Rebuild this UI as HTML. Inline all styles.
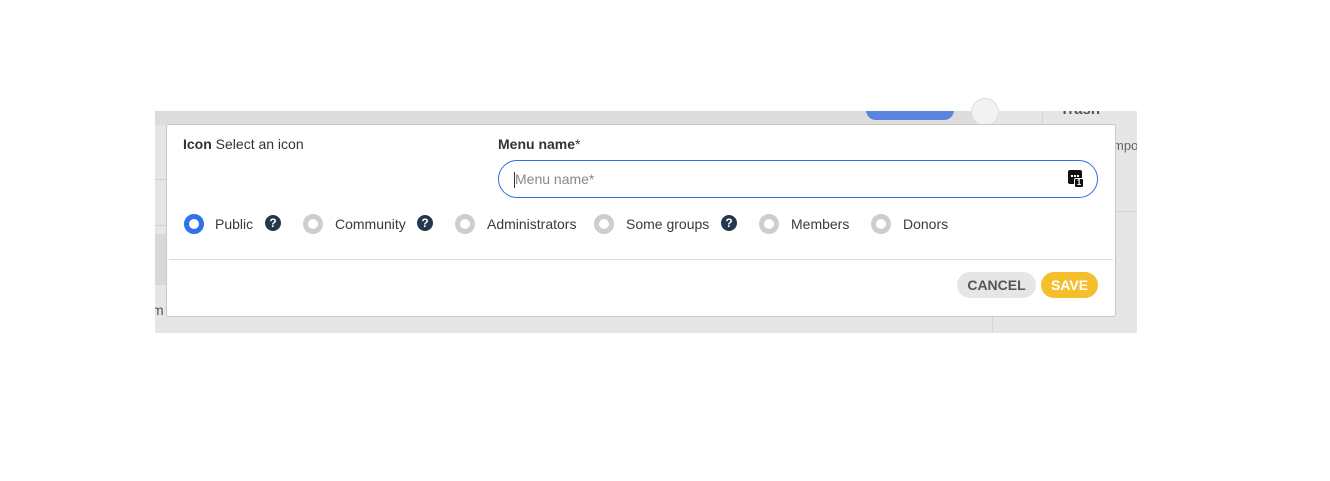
<!DOCTYPE html>
<html><head><style>
*{box-sizing:border-box;margin:0;padding:0}
body{width:1330px;height:481px;background:#fff;position:relative;font-family:"Liberation Sans",Arial,sans-serif;overflow:hidden}
.abs{position:absolute}
.dlg{left:166px;top:124px;width:950px;height:193px;background:#fff;border:1px solid #c8c8c8;border-radius:3px}
.t{font-size:14px;color:#333}
.radio{position:absolute;width:20px;height:20px;border-radius:50%;border:5px solid #cfcdc9;background:#fff}
.radio.on{border-color:#2f73e8}
.q{position:absolute;width:16px;height:16px;border-radius:50%;background:#253650;color:#fff;font-size:12px;font-weight:bold;text-align:center;line-height:16px}
.lbl{position:absolute;font-size:14px;color:#3a3a3a}
</style></head><body>
<div class="abs" style="left:155px;top:111px;width:982px;height:222px;background:#e6e6e6;overflow:hidden">
 <div class="abs" style="left:0;top:0;width:837px;height:14px;background:#dcdcdc"></div>
 <div class="abs" style="left:0;top:68px;width:12px;height:1px;background:#d0d0d0"></div>
 <div class="abs" style="left:0;top:114px;width:12px;height:1px;background:#d0d0d0"></div>
 <div class="abs" style="left:0;top:123px;width:12px;height:51px;background:#d8d8d8"></div>
 <div class="abs t" style="left:-3px;top:191px;color:#555">m</div>
 <div class="abs" style="left:711px;top:-11px;width:88px;height:20px;border-radius:10px;background:#5b84e0"></div>
 <div class="abs" style="left:837px;top:0;width:1px;height:222px;background:#d4d4d4"></div>
 <div class="abs" style="left:887px;top:0;width:1px;height:14px;background:#d4d4d4"></div>
 <div class="abs" style="left:905px;top:-10px;font-size:15px;color:#555;font-weight:bold">Trash</div>
 <div class="abs t" style="left:958px;top:27px;color:#666;font-size:13px">mpor</div>
 <div class="abs" style="left:960px;top:100px;width:22px;height:1px;background:#d4d4d4"></div>
</div>
<div class="abs" style="left:971px;top:98px;width:28px;height:28px;border-radius:50%;background:#f2f2f2;border:1px solid #ddd"></div>
<div class="abs dlg">
 <div class="abs t" style="left:16px;top:11px"><b>Icon</b> Select an icon</div>
 <div class="abs t" style="left:331px;top:11px"><b>Menu name</b>*</div>
 <div class="abs" style="left:331px;top:35px;width:600px;height:38px;border:1px solid #2f6ee6;border-radius:19px">
  <div class="abs" style="left:15px;top:11px;width:1px;height:16px;background:#333"></div>
  <div class="abs" style="left:16px;top:10px;font-size:14px;color:#888">Menu name*</div>
  <div class="abs" style="left:569px;top:9px;width:14px;height:14px;background:#111;border-radius:2px"></div>
  <div class="abs" style="left:572px;top:14px;width:8px;height:1px;border-top:2px dotted #fff"></div>
  <div class="abs" style="left:575px;top:17px;width:10px;height:10px;background:#111;border:1px solid #fff;border-radius:2px;color:#fff;font-size:8px;line-height:8px;text-align:center;font-weight:bold">1</div>
 </div>
 <div class="radio on" style="left:17px;top:89px"></div><div class="lbl" style="left:48px;top:91px">Public</div><div class="q" style="left:98px;top:90px">?</div>
 <div class="radio" style="left:136px;top:89px"></div><div class="lbl" style="left:168px;top:91px">Community</div><div class="q" style="left:250px;top:90px">?</div>
 <div class="radio" style="left:288px;top:89px"></div><div class="lbl" style="left:320px;top:91px">Administrators</div>
 <div class="radio" style="left:427px;top:89px"></div><div class="lbl" style="left:459px;top:91px">Some groups</div><div class="q" style="left:554px;top:90px">?</div>
 <div class="radio" style="left:592px;top:89px"></div><div class="lbl" style="left:624px;top:91px">Members</div>
 <div class="radio" style="left:704px;top:89px"></div><div class="lbl" style="left:736px;top:91px">Donors</div>
 <div class="abs" style="left:2px;top:134px;width:944px;height:1px;background:#ddd"></div>
 <div class="abs" style="left:790px;top:147px;width:79px;height:26px;border-radius:13px;background:#e6e6e6;color:#555;font-weight:bold;font-size:14px;text-align:center;line-height:26px">CANCEL</div>
 <div class="abs" style="left:874px;top:147px;width:57px;height:26px;border-radius:13px;background:#f4be2c;color:#fff;font-weight:bold;font-size:14px;text-align:center;line-height:26px">SAVE</div>
</div>
</body></html>
